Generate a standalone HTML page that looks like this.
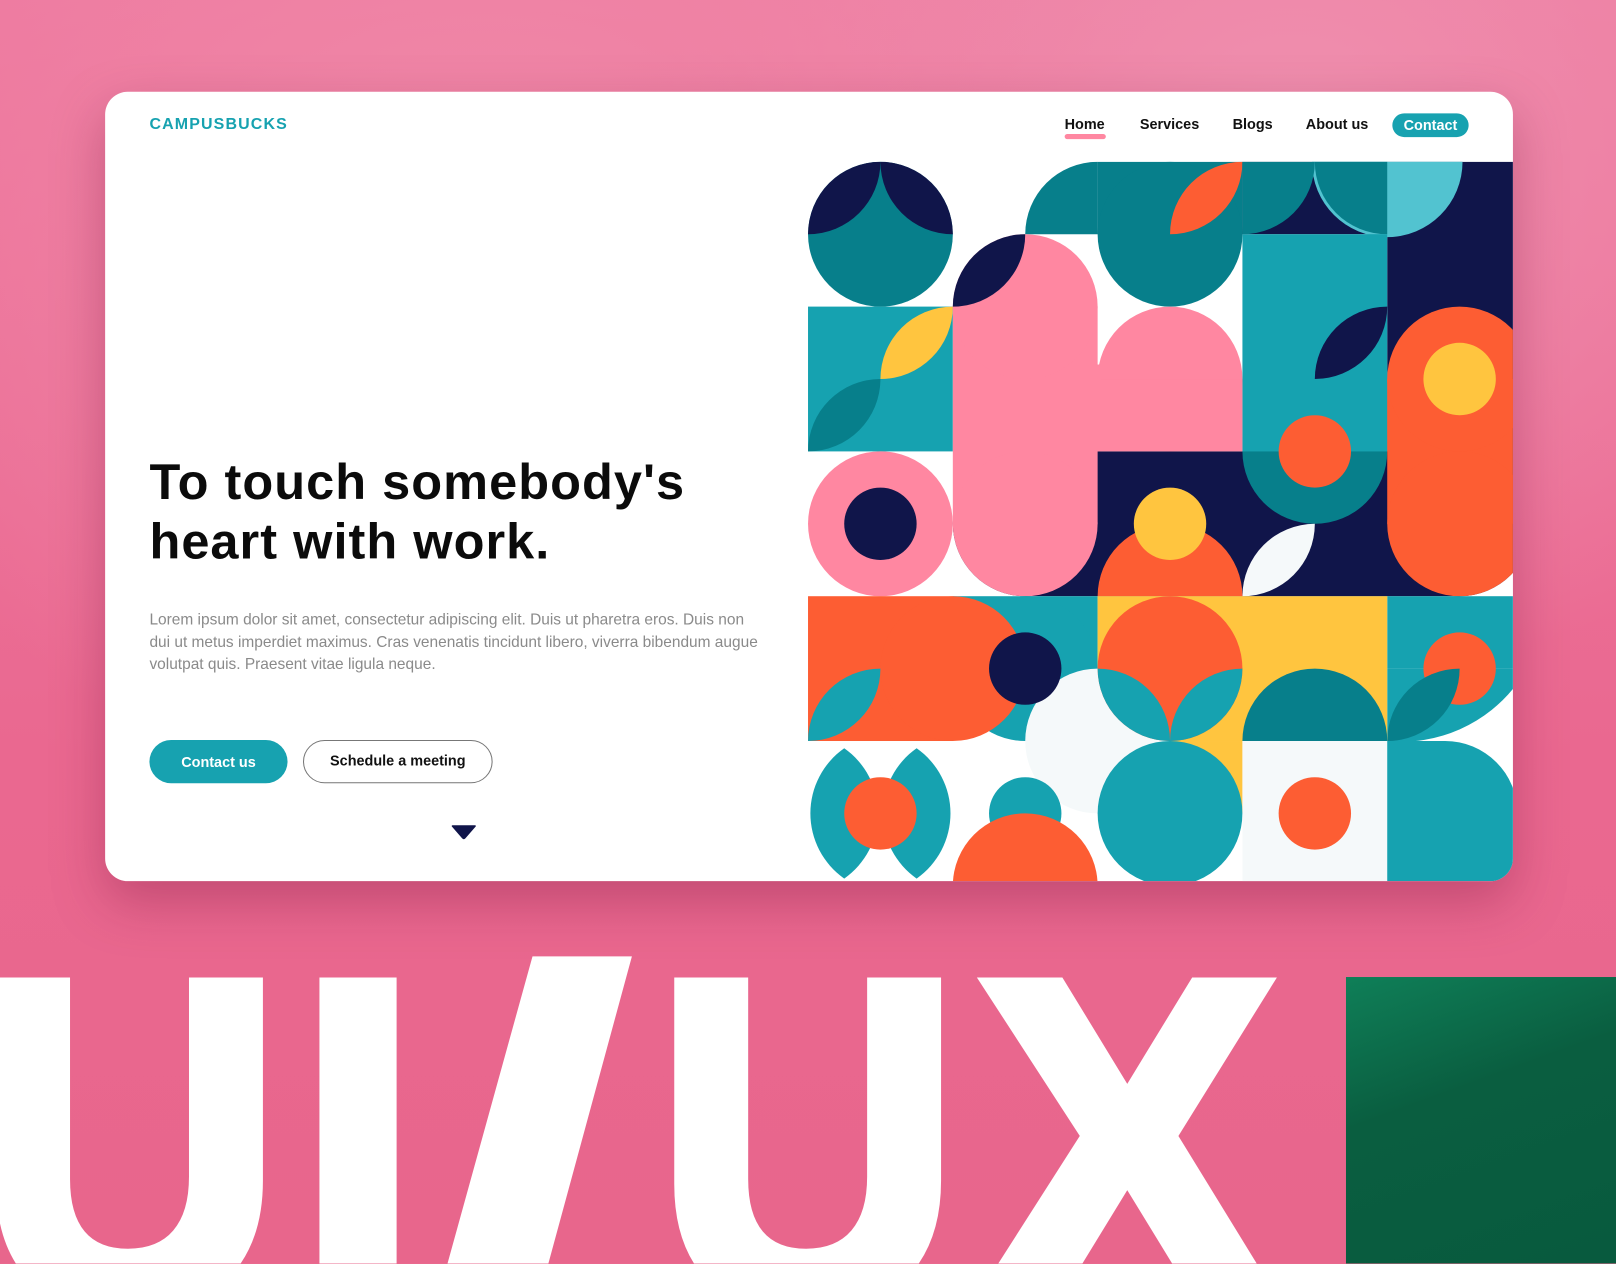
<!DOCTYPE html>
<html><head><meta charset="utf-8"><style>
*{margin:0;padding:0;box-sizing:border-box}
html,body{width:1616px;height:1264px;overflow:hidden}
body{background:#ea6d92;position:relative}
#w{position:absolute;left:0;top:0;width:1568px;height:1226px;transform:scale(1.030612);transform-origin:0 0;overflow:hidden;
background:radial-gradient(ellipse at 30% 20%,#f08aa9 0%,rgba(240,138,169,0) 40%),radial-gradient(ellipse at 80% 10%,#ef8fae 0%,rgba(239,143,174,0) 35%),linear-gradient(180deg,#ee7aa0 0%,#ea6890 60%,#e8668c 100%);font-family:"Liberation Sans",sans-serif}
.card{position:absolute;left:102px;top:89px;width:1366px;height:766px;background:#fff;border-radius:22px;overflow:hidden;box-shadow:0 20px 50px rgba(120,20,60,.35)}
.logo{position:absolute;left:43px;top:23px;color:#17a2b0;font-weight:bold;font-size:15.5px;letter-spacing:1.1px}
.nav{position:absolute;top:23px;font-size:14px;color:#111;font-weight:bold}
.ul{position:absolute;left:931px;top:41px;width:40px;height:5px;border-radius:3px;background:#ff87a1}
.cbtn{position:absolute;left:1249px;top:21px;width:74px;height:23px;border-radius:12px;background:#17a2b0;color:#fff;font-size:14px;font-weight:bold;text-align:center;line-height:23px}
h1{position:absolute;left:43px;top:350px;font-size:49px;line-height:58px;font-weight:bold;color:#0b0b0b;letter-spacing:1px}
p{position:absolute;left:43px;top:502px;width:596px;font-size:15px;line-height:21.5px;color:#8a8a8a}
.b1{position:absolute;left:43px;top:629px;width:134px;height:42px;border-radius:21px;background:#17a2b0;color:#fff;font-size:14px;font-weight:bold;text-align:center;line-height:42px}
.b2{position:absolute;left:192px;top:629px;width:184px;height:42px;border-radius:21px;border:1.5px solid #777;color:#111;font-size:14px;font-weight:bold;text-align:center;line-height:39px}
.big{position:absolute;top:885px;color:#fff;font-weight:bold;font-size:450px;line-height:450px;transform-origin:0 0;-webkit-text-stroke:14px #fff}
</style></head><body><div id="w">
<div style="position:absolute;left:1306px;top:948px;width:262px;height:278px;background:linear-gradient(160deg,#0f7f58 0%,#0a5e40 40%,#085a3e 100%)"></div>
<div class="big" style="left:-22px;transform:scaleX(.91)">U</div>
<div class="big" style="left:288px;transform:scaleX(.95)">I</div>
<div class="big" style="left:426px;top:881px;transform:scaleX(1.45)">/</div>
<div class="big" style="left:636px;transform:scaleX(.91)">U</div>
<div class="big" style="left:948px;transform:scaleX(.97)">X</div>
<div class="card">
<div class="logo">CAMPUSBUCKS</div>
<div class="nav" style="left:931px">Home</div>
<div class="ul"></div>
<div class="nav" style="left:1004px">Services</div>
<div class="nav" style="left:1094px">Blogs</div>
<div class="nav" style="left:1165px">About us</div>
<div class="cbtn">Contact</div>
<h1>To touch somebody's<br>heart with work.</h1>
<p>Lorem ipsum dolor sit amet, consectetur adipiscing elit. Duis ut pharetra eros. Duis non dui ut metus imperdiet maximus. Cras venenatis tincidunt libero, viverra bibendum augue volutpat quis. Praesent vitae ligula neque.</p>
<div class="b1">Contact us</div>
<div class="b2">Schedule a meeting</div>
<svg style="position:absolute;left:336px;top:711px" width="24" height="16" viewBox="0 0 24 16"><path d="M1,1.5 L23,1.5 L13,13 Q12,14 11,13 Z" fill="#10154a" stroke="#10154a" stroke-width="1.5" stroke-linejoin="round"/></svg>
<svg style="position:absolute;left:682px;top:68px" width="684" height="698" viewBox="0 0 486.8 496.8">
<defs>
<clipPath id="c0"><circle cx="50" cy="50" r="50"/></clipPath>
<clipPath id="c3"><rect x="300" y="0" width="100" height="50"/></clipPath>
</defs>
<circle cx="50" cy="50" r="50" fill="#077f8b"/>
<g clip-path="url(#c0)"><circle cx="0" cy="0" r="50" fill="#10154a"/><circle cx="100" cy="0" r="50" fill="#10154a"/></g>
<path d="M150,50 A50,50 0 0 1 200,0 L200,50 Z" fill="#077f8b"/>
<rect x="200" y="0" width="100" height="50" fill="#077f8b"/><circle cx="250" cy="50" r="50" fill="#077f8b"/>
<path d="M250,50 A50,50 0 0 1 300,0 A50,50 0 0 1 250,50 Z" fill="#fd5d33"/>
<rect x="400" y="0" width="90" height="250" fill="#10154a"/><circle cx="450" cy="250" r="50" fill="#10154a"/>
<rect x="300" y="0" width="100" height="50" fill="#10154a"/>
<circle cx="400" cy="0" r="52" fill="#52c3d0"/>
<rect x="300" y="50" width="100" height="250" fill="#16a2b0"/>
<g clip-path="url(#c3)"><circle cx="300" cy="0" r="50" fill="#077f8b"/><circle cx="400" cy="0" r="50" fill="#077f8b"/></g>
<rect x="0" y="100" width="100" height="100" fill="#16a2b0"/>
<path d="M50,150 A50,50 0 0 1 100,100 A50,50 0 0 1 50,150 Z" fill="#ffc53f"/>
<path d="M0,200 A50,50 0 0 1 50,150 A50,50 0 0 1 0,200 Z" fill="#077f8b"/>
<path d="M350,150 A50,50 0 0 1 400,100 A50,50 0 0 1 350,150 Z" fill="#10154a"/>
<rect x="150" y="200" width="300" height="100" fill="#10154a"/><circle cx="150" cy="250" r="50" fill="#10154a"/>
<path d="M300,200 A50,50 0 0 0 400,200 Z" fill="#077f8b"/>
<rect x="300" y="190" width="100" height="10" fill="#16a2b0"/>
<circle cx="350" cy="200" r="25" fill="#fd5d33"/>
<path d="M300,300 A50,50 0 0 1 350,250 A50,50 0 0 1 300,300 Z" fill="#f5f9fa"/>
<path d="M200,300 A50,50 0 0 1 300,300 Z" fill="#fd5d33"/><circle cx="250" cy="250" r="25" fill="#ffc53f"/>
<rect x="400" y="150" width="100" height="100" fill="#fd5d33"/><circle cx="450" cy="150" r="50" fill="#fd5d33"/><circle cx="450" cy="250" r="50" fill="#fd5d33"/>
<circle cx="450" cy="150" r="25" fill="#ffc53f"/>
<rect x="100" y="100" width="100" height="150" fill="#ff87a1"/><circle cx="150" cy="100" r="50" fill="#ff87a1"/><circle cx="150" cy="250" r="50" fill="#ff87a1"/>
<path d="M100,100 A50,50 0 0 1 150,50 A50,50 0 0 1 100,100 Z" fill="#10154a"/>
<circle cx="250" cy="150" r="50" fill="#ff87a1"/><rect x="200" y="150" width="100" height="50" fill="#ff87a1"/>
<rect x="198" y="140" width="4" height="60" fill="#ff87a1"/>
<circle cx="50" cy="250" r="50" fill="#ff87a1"/><circle cx="50" cy="250" r="25" fill="#10154a"/>
<rect x="400" y="300" width="90" height="50" fill="#16a2b0"/><path d="M400,350 L490,350 L490,360 A100,100 0 0 1 400,400 Z" fill="#16a2b0"/>
<circle cx="450" cy="350" r="25" fill="#fd5d33"/>
<path d="M400,400 A50,50 0 0 1 450,350 A50,50 0 0 1 400,400 Z" fill="#077f8b"/>
<rect x="100" y="300" width="100" height="50" fill="#16a2b0"/><circle cx="150" cy="350" r="50" fill="#16a2b0"/>
<rect x="200" y="300" width="200" height="100" fill="#ffc53f"/><rect x="200" y="400" width="100" height="50" fill="#ffc53f"/>
<circle cx="200" cy="400" r="50" fill="#f5f9fa"/>
<rect x="0" y="300" width="100" height="100" fill="#fd5d33"/><circle cx="100" cy="350" r="50" fill="#fd5d33"/>
<circle cx="150" cy="350" r="25" fill="#10154a"/>
<path d="M0,400 A50,50 0 0 1 50,350 A50,50 0 0 1 0,400 Z" fill="#16a2b0"/>
<circle cx="250" cy="350" r="50" fill="#fd5d33"/>
<path d="M200,350 A50,50 0 0 1 250,400 A50,50 0 0 1 200,350 Z" fill="#16a2b0"/>
<path d="M250,400 A50,50 0 0 1 300,350 A50,50 0 0 1 250,400 Z" fill="#16a2b0"/>
<path d="M300,400 A50,50 0 0 1 400,400 Z" fill="#077f8b"/>
<path d="M25,405 A55,55 0 0 0 25,495 A55,55 0 0 0 25,405 Z" fill="#16a2b0"/>
<path d="M75,405 A55,55 0 0 0 75,495 A55,55 0 0 0 75,405 Z" fill="#16a2b0"/>
<circle cx="50" cy="450" r="25" fill="#fd5d33"/>
<circle cx="150" cy="450" r="25" fill="#16a2b0"/>
<circle cx="150" cy="500" r="50" fill="#fd5d33"/>
<circle cx="250" cy="450" r="50" fill="#16a2b0"/>
<rect x="300" y="400" width="100" height="100" fill="#f5f9fa"/>
<circle cx="350" cy="450" r="25" fill="#fd5d33"/>
<path d="M400,400 L440,400 A50,50 0 0 1 490,450 L490,500 L400,500 Z" fill="#16a2b0"/>
</svg>
</div>
</div></body></html>
